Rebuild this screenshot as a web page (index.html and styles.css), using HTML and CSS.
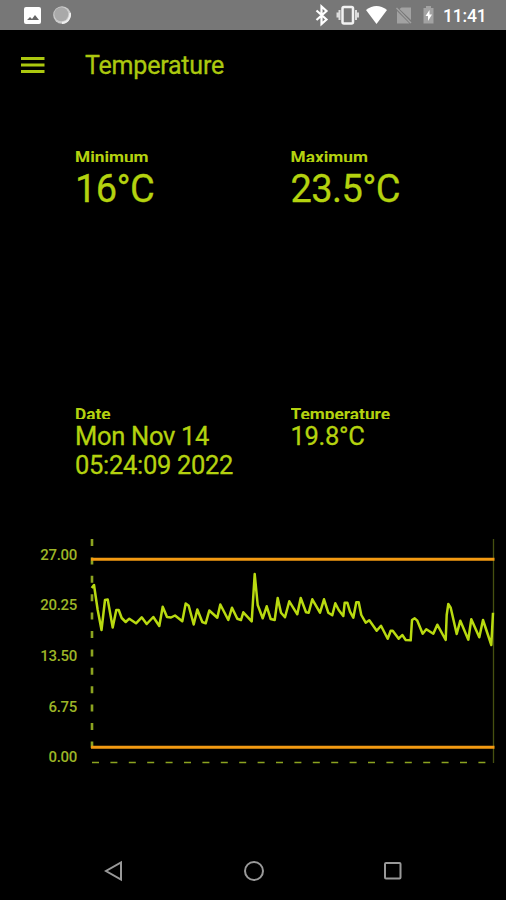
FILE: index.html
```html
<!DOCTYPE html>
<html lang="en">
<head>
    <meta charset="UTF-8">
    <meta name="viewport" content="width=device-width, initial-scale=1.0">
    <title>Temperature</title>
    <link rel="stylesheet" href="styles.css">
</head>
<body>
    <div class="status-bar">
        <svg class="status-left" width="60" height="30" viewBox="0 0 60 30">
            <rect x="4" y="7" width="17" height="17" rx="2" fill="#fff"/>
            <path d="M7 20l3-3 2 2 3-4 4 5z" fill="#666"/>
            <circle cx="42" cy="15" r="8.8" fill="#ccc"/>
            <circle cx="41.300" cy="14.300" r="7" fill="#a9a9a9"/>
            <path d="M50 13a8.500 8.500 0 0 1-8 10" fill="none" stroke="#eee" stroke-width="1.800"/>
        </svg>
        <svg class="status-right" width="128" height="30" viewBox="312 0 128 30">
            <path d="M316.500 10.500l10 9-5 4.500V6.500l5 4.500-10 9" fill="none" stroke="#fff" stroke-width="2.200"/>
            <rect x="342.500" y="7" width="10.500" height="16.500" rx="1.500" fill="none" stroke="#f2f2f2" stroke-width="2.500"/>
            <path d="M339.500 10v10M356 10v10M337.500 12.500v5M358 12.500v5" stroke="#ddd" stroke-width="2"/>
            <path d="M366 10q10.500-8 21 0L376.500 24z" fill="#fff"/>
            <path d="M399.500 9l2-1.500H411V20zM397 11l12.500 12.500H397z" fill="#a2a2a2"/>
            <path d="M396.500 8l14.500 15" stroke="#a2a2a2" stroke-width="1.400"/>
            <path d="M426 6h5v2h2.500v15.500h-10V8h2.500z" fill="#a2a2a2"/>
            <path d="M429.500 10l-4 6h2.500v5l4-6.500h-2.500z" fill="#fff"/>
        </svg>
        <span class="clock">11:41</span>
    </div>

    <div class="toolbar">
        <svg class="menu-icon" width="24" height="18" viewBox="0 0 24 18">
            <path d="M0 2.500h23.500M0 9h23.500M0 15.500h23.500" stroke="#acc80f" stroke-width="2.900"/>
        </svg>
        <h1>Temperature</h1>
    </div>

    <div class="readings range">
        <div class="reading">
            <div class="label">Minimum</div>
            <div class="value">16°C</div>
        </div>
        <div class="reading">
            <div class="label">Maximum</div>
            <div class="value">23.5°C</div>
        </div>
    </div>

    <div class="readings current">
        <div class="reading">
            <div class="label">Date</div>
            <div class="value">Mon Nov 14<br>05:24:09 2022</div>
        </div>
        <div class="reading">
            <div class="label">Temperature</div>
            <div class="value">19.8°C</div>
        </div>
    </div>

    <div class="chart">
        <div class="axis">
            <span>27.00</span>
            <span>20.25</span>
            <span>13.50</span>
            <span>6.75</span>
            <span>0.00</span>
        </div>
        <svg class="plot" width="410" height="230" viewBox="90 536 410 230">
            <path class="grid" d="M92 539V748"/>
            <path class="grid thin" d="M92 762.500H490"/>
            <path class="edge" d="M493.500 539V763"/>
            <path class="limit" d="M91 559.300H494.500M91 747.300H494.500"/>
            <polyline class="series" points="91.700,588 94,585 97.700,610 101.500,630 105,600 107.700,599.500 112.700,627.500 116.300,610 118.700,610 121.700,618 125.700,622 129.300,618.700 136,623.300 141.700,617.300 146.700,624 153.300,617 159.300,626 162.700,606.700 167,617 171,617.500 175,615.500 182.300,621.300 185.700,603.500 188.700,605.700 193.700,624.500 197.300,609.500 202.300,622 205.700,623.300 209.300,610.500 217.300,617.700 220.300,604.500 228.300,620 232,607.700 237.300,618.700 241,620 243.300,612.300 251.700,621.300 254.700,574 257.700,605 262.700,618.300 266.700,606.300 270.700,619 274.700,620 277.700,598 281,612.700 285,617.300 289.300,601.300 297.300,614.300 300.700,598 306,612.300 308.700,612.700 312.300,599.300 320,612.700 324,599.300 328.300,612.700 332.300,615.300 335.300,603.300 338.700,610 343.300,616 344.700,602.700 347.300,602.700 350,611.700 353.300,617.700 356.300,602.300 358.700,602.300 361.300,615 365.700,622.700 369.300,620.300 376.700,630.700 381,625.700 387.700,638.700 390.700,630.700 392.700,630.700 398.700,638.700 402.300,635 405.700,640 410.700,640.300 412,620 414.700,618.300 417.300,620.700 422.700,633.700 426.300,629.300 433.300,633.700 437.300,624.700 445.700,640 446.700,615 448.300,604 450.700,607.700 456.700,634 460.300,620.700 468.300,639.700 471.300,619.300 479.300,637.300 483,620 491.300,645 493,612.700"/>
        </svg>
    </div>

    <div class="nav-bar">
        <svg width="20" height="22" viewBox="0 0 20 22">
            <path d="M17 2.500v17L2 11z"/>
        </svg>
        <svg width="22" height="22" viewBox="0 0 22 22">
            <circle cx="11" cy="11" r="9"/>
        </svg>
        <svg width="20" height="22" viewBox="0 0 20 22">
            <rect x="2" y="3" width="15.500" height="15.500" rx="1"/>
        </svg>
    </div>
</body>
</html>
```

FILE: styles.css
```css
body {
    margin: 0;
    height: 900px;
    display: flex;
    flex-direction: column;
    overflow: hidden;
    background-color: #000;
    color: #b4d20f;
    font-family: Roboto, "Liberation Sans", sans-serif;
}

svg {
    display: block;
}

.status-bar {
    flex: none;
    display: flex;
    align-items: center;
    height: 30px;
    padding-left: 20px;
    background-color: #777;
    color: #fff;
}

.status-right {
    margin-left: 232px;
}

.clock {
    margin-left: 3px;
    font-size: 17.5px;
    font-weight: 500;
    letter-spacing: -0.2px;
    line-height: 30px;
    padding-top: 2px;
}

.toolbar {
    flex: none;
    display: flex;
    align-items: center;
    height: 70px;
    padding-left: 21px;
}

h1 {
    margin: 2px 0 0 40px;
    font-size: 25px;
    font-weight: 400;
    letter-spacing: -0.2px;
    line-height: 30px;
    color: #acc80f;
    -webkit-text-stroke: 0.3px;
}

.readings {
    flex: none;
    display: flex;
    padding-left: 75px;
}

.range {
    height: 257px;
    padding-top: 48px;
}

.current {
    height: 131px;
}

.reading {
    width: 216px;
}

/* labels are cut off at the bottom of their row */
.label {
    height: 14px;
    overflow: hidden;
    font-size: 17.3px;
    font-weight: 700;
    line-height: 18px;
}

.value {
    -webkit-text-stroke: 0.3px;
}

.range .value {
    font-size: 38px;
    letter-spacing: -0.6px;
    line-height: 50px;
    padding-top: 2px;
}

.current .value {
    font-size: 25.5px;
    letter-spacing: -0.3px;
    line-height: 29px;
    padding-top: 3px;
}

.chart {
    flex: none;
    display: flex;
    height: 230px;
}

.axis {
    display: flex;
    flex-direction: column;
    width: 77px;
    margin-right: 13px;
    padding-top: 8.5px;
    text-align: right;
    font-size: 15px;
    font-weight: 500;
    letter-spacing: -0.3px;
    line-height: 20px;
    gap: 30.7px;
    color: #9db526;
}

.plot path,
.plot polyline {
    fill: none;
}

.plot .grid {
    stroke: #8ca320;
    stroke-width: 2.6;
    stroke-dasharray: 7 11.4;
}

.plot .thin {
    stroke-width: 1.6;
}

.plot .edge {
    stroke: #465010;
    stroke-width: 1.3;
}

.plot .limit {
    stroke: #f39a12;
    stroke-width: 3;
}

.plot .series {
    stroke: #b9da10;
    stroke-width: 2.5;
    stroke-linejoin: round;
}

.nav-bar {
    display: flex;
    justify-content: space-between;
    margin-top: 94px;
    padding: 0 103px 0 104px;
}

.nav-bar svg {
    fill: none;
    stroke: #999;
    stroke-width: 2;
}
```
